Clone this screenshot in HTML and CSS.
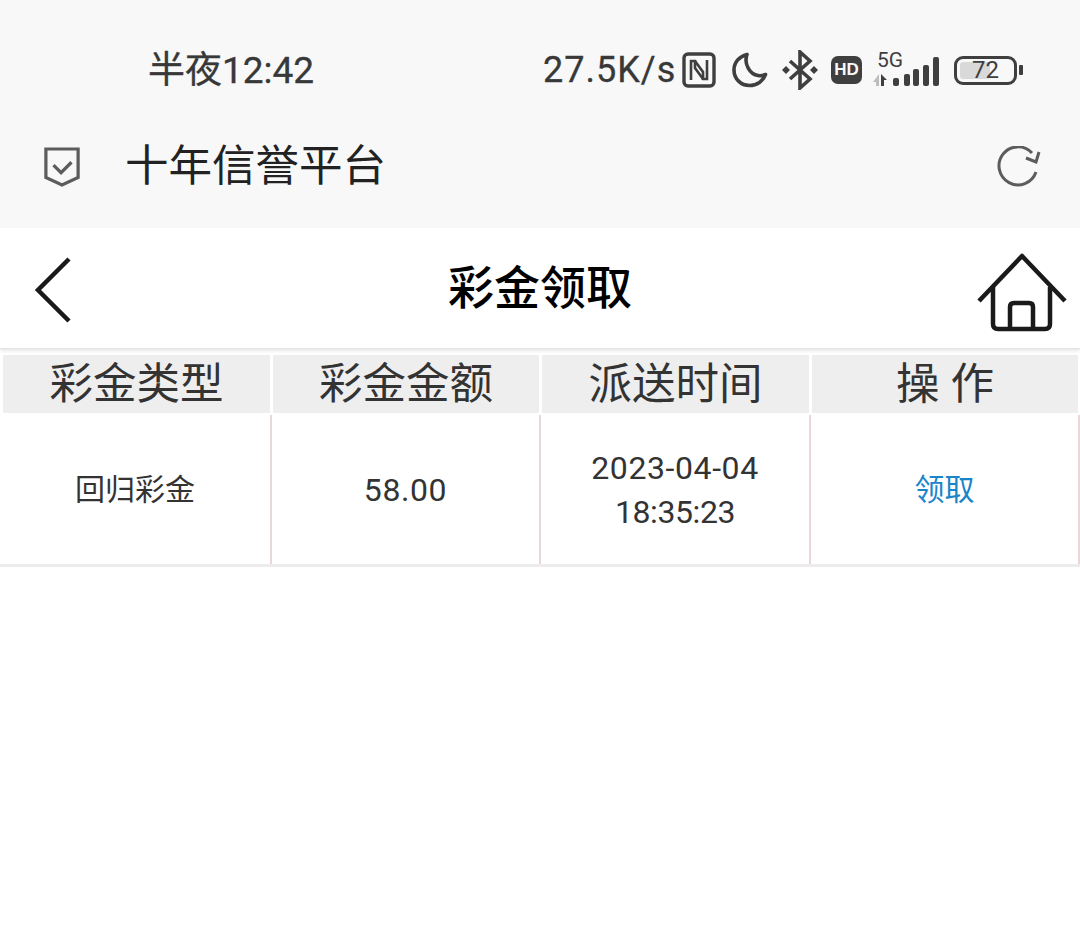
FILE: index.html
```html
<!DOCTYPE html>
<html lang="zh">
<head>
<meta charset="utf-8">
<title>彩金领取</title>
<link rel="stylesheet" href="styles.css">
</head>
<body>
<div class="chrome">
  <div class="status">
    <span class="time">半夜12:42</span>
    <div class="status-right">
      <span class="speed">27.5K/s</span>
      <svg class="i-nfc" width="34" height="36" viewBox="0 0 34 36" fill="none" stroke="#3f3f3f">
        <rect x="2" y="2" width="30" height="32" rx="4" stroke-width="3.400"/>
        <path d="M9 28V9h4l8 11v8" stroke-width="2.600"/>
        <path d="M25 8v19h-4l-8-11V8" stroke-width="2.600"/>
      </svg>
      <svg class="i-moon" width="36" height="36" viewBox="0 0 36 36" fill="none" stroke="#3f3f3f" stroke-width="3.600" stroke-linejoin="round">
        <path d="M15 2.500C7 4.500 2 10.500 2 18c0 9 7 15.500 15.500 15.500 7.500 0 13.500-4.500 16-11-2.500 1-5 1.500-7.500 1C18 22.500 11.500 12 15 2.500z"/>
      </svg>
      <svg class="i-bt" width="36" height="40" viewBox="0 0 36 40" fill="none" stroke="#3f3f3f" stroke-width="3.600">
        <path d="M8 11l20 18-10 9V2l10 9L8 29"/>
        <path d="M0 20l4-4 4 4-4 4zM28 20l4-4 4 4-4 4z" fill="#3f3f3f" stroke="none"/>
      </svg>
      <span class="hd">HD</span>
      <div class="signal">
        <span class="five-g">5G</span>
        <svg width="68" height="30" viewBox="0 0 68 30">
          <path d="M6 18v12H3v-4H0z" fill="#bdbdbd"/>
          <path d="M8 30V18l6 6h-3v6z" fill="#3f3f3f"/>
          <rect x="20" y="22" width="6" height="8" rx="2" fill="#3f3f3f"/>
          <rect x="31" y="18" width="6" height="12" rx="2" fill="#3f3f3f"/>
          <rect x="40" y="13" width="6" height="17" rx="2" fill="#3f3f3f"/>
          <rect x="50" y="9" width="6" height="21" rx="2" fill="#3f3f3f"/>
          <rect x="60" y="1" width="6" height="29" rx="2" fill="#3f3f3f"/>
        </svg>
      </div>
      <div class="battery">
        <div class="battery-body">
          <div class="battery-fill"></div>
          <span class="battery-num">72</span>
        </div>
        <div class="battery-cap"></div>
      </div>
    </div>
  </div>
  <div class="address">
    <svg class="i-shield" width="38" height="42" viewBox="0 0 38 42" fill="none" stroke="#5c5c5c">
      <path d="M2 2h34v30L19 40 2 32z" stroke-width="3.400"/>
      <path d="M10 19l8 8 11-11" stroke-width="3.400"/>
    </svg>
    <span class="site">十年信誉平台</span>
    <svg class="i-reload" width="46" height="42" viewBox="0 0 46 42" fill="none" stroke="#5c5c5c" stroke-width="3">
      <path d="M40 26A19 19 0 1 1 36 7"/>
      <path d="M43 6l-3 10-10-4"/>
    </svg>
  </div>
</div>
<header class="title-bar">
  <svg class="i-back" width="40" height="66" viewBox="0 0 40 66" fill="none" stroke="#1a1a1a" stroke-width="4.500">
    <path d="M36 2L5 33l31 31"/>
  </svg>
  <h1 class="title">彩金领取</h1>
  <svg class="i-home" width="90" height="80" viewBox="0 0 90 80" fill="none" stroke="#1a1a1a" stroke-width="4.500" stroke-linejoin="round">
    <path d="M2 49L45 4l43 45"/>
    <path d="M16 35v37q0 5 5 5h47q5 0 5-5V35"/>
    <path d="M33 77V55q0-4 4-4h15q4 0 4 4v22"/>
  </svg>
</header>
<div class="table">
  <div class="th">彩金类型</div>
  <div class="th">彩金金额</div>
  <div class="th">派送时间</div>
  <div class="th">操 作</div>
  <div class="td">回归彩金</div>
  <div class="td num">58.00</div>
  <div class="td num"><span>2023-04-04<br><span class="clock">18:35:23</span></span></div>
  <div class="td link">领取</div>
</div>
</body>
</html>
```
FILE: styles.css
```css
* { box-sizing: border-box; }
html, body { margin: 0; padding: 0; background: #fff; }
body {
  width: 1080px;
  height: 937px;
  overflow: hidden;
  font-family: Roboto, "Noto Sans CJK SC", sans-serif;
  color: #333;
}
svg { display: block; flex: none; }

.chrome { height: 228px; background: #f8f8f8; }
.status {
  height: 120px;
  padding: 20px 57px 0 148px;
  display: flex;
  align-items: center;
  justify-content: space-between;
}
.time { font-size: 37px; color: #383838; line-height: 1; -webkit-text-stroke: 0.3px #383838; }
.status-right { display: flex; align-items: center; }
.speed { font-size: 36px; color: #383838; letter-spacing: 1px; line-height: 1; width: 139px; white-space: nowrap; -webkit-text-stroke: 0.3px #383838; }
.i-nfc { margin-right: 16px; }
.i-moon { margin-right: 14px; }
.i-bt { margin-right: 13px; }
.hd {
  width: 31px;
  height: 28px;
  border-radius: 7px;
  background: #3f3f3f;
  color: #f8f8f8;
  font: 700 17px/28px "Liberation Sans", sans-serif;
  text-align: center;
  margin-right: 11px;
}
.signal { position: relative; width: 68px; height: 30px; margin-right: 13px; margin-top: 1px; }
.five-g { position: absolute; left: 4px; top: -6px; font-size: 21px; line-height: 20px; color: #3f3f3f; }
.battery { display: flex; align-items: center; gap: 2px; }
.battery-body {
  position: relative;
  width: 63px;
  height: 29px;
  border: 3px solid #3f3f3f;
  border-radius: 9px;
  display: flex;
  align-items: center;
  justify-content: center;
  overflow: hidden;
  padding: 3px;
}
.battery-fill { position: absolute; left: 3px; top: 3px; bottom: 3px; width: 30px; background: #d9d9d9; border-radius: 3px; }
.battery-num { position: relative; font-size: 24px; line-height: 1; color: #3f3f3f; }
.battery-cap { width: 4px; height: 10px; background: #3f3f3f; border-radius: 1px; }

.address {
  height: 108px;
  display: flex;
  align-items: flex-start;
  padding: 26px 38px 0 44px;
}
.i-shield { margin-right: 45px; width: 36px; }
.site { font-size: 43.500px; line-height: 42px; color: #222; }
.i-reload { margin-left: auto; }

.title-bar {
  height: 121px;
  display: grid;
  grid-template-columns: 1fr auto 1fr;
  align-items: center;
  border-bottom: 1px solid #e4e4e4;
  box-shadow: 0 2px 3px #e8e8e8;
}
.i-back { margin: 4px 0 0 33px; }
.title { margin: 0; font-size: 46px; font-weight: 500; color: #000; line-height: 1; }
.i-home { justify-self: end; margin: 8px 13px 0 0; }

.table {
  margin-top: 6px;
  display: grid;
  grid-template-columns: 272px 269px 270px 269px;
  grid-template-rows: 60px 149px;
  border-bottom: 3px solid #ececec;
}
.th {
  background: #eeeeee;
  border-left: 1px solid #fff;
  border-right: 2px solid #fff;
  font-size: 43.500px;
  line-height: 1;
  color: #333;
  display: flex;
  align-items: center;
  justify-content: center;
  margin-bottom: 2px;
  padding-top: 2px;
}
.th:first-child { border-left-width: 3px; }
.td {
  font-size: 30px;
  line-height: 44px;
  text-align: center;
  color: #333;
  display: flex;
  align-items: center;
  justify-content: center;
  border-right: 2px solid #e8d8d8;
}
.td.num { font-size: 32px; letter-spacing: 0.6px; }
.clock { letter-spacing: -0.4px; }
.td.link { color: #1a85c8; }
```
